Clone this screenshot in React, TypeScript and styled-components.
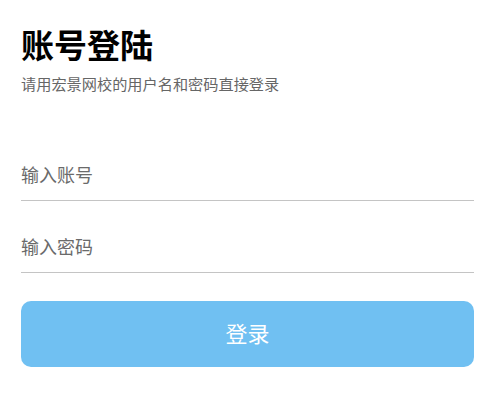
import React from "react";
import styled, { createGlobalStyle } from "styled-components";

const Global = createGlobalStyle`
  html, body { margin: 0; padding: 0; background: #fff; }
  body { font-family: "Noto Sans CJK SC", "Noto Sans", sans-serif; }
`;

const Page = styled.div`
  display: flex;
  flex-direction: column;
  padding: 24px 15px 0 21px;
`;

const Title = styled.h1`
  margin: 0;
  font-size: 33px;
  line-height: 40px;
  font-weight: 700;
  color: #000;
`;

const Subtitle = styled.p`
  margin: 8px 0 0;
  font-size: 15.2px;
  line-height: 22px;
  color: #666;
`;

const Form = styled.form`
  display: flex;
  flex-direction: column;
  margin-top: 35px;
`;

const Field = styled.input`
  box-sizing: border-box;
  border: none;
  border-bottom: 1px solid #c4c4c4;
  outline: none;
  padding: 18px 0 0;
  height: 72px;
  font-family: inherit;
  font-size: 18px;
  color: #333;
  background: transparent;
  &::placeholder { color: #6a6a6a; }
`;

const Button = styled.button`
  margin-top: 28px;
  height: 66px;
  padding: 0 0 5px;
  border: none;
  border-radius: 10px;
  background: #70c0f2;
  color: #fff;
  font-family: inherit;
  font-size: 22px;
`;

export default function App() {
  return (
    <>
      <Global />
      <Page>
        <Title>账号登陆</Title>
        <Subtitle>请用宏景网校的用户名和密码直接登录</Subtitle>
        <Form onSubmit={(e) => e.preventDefault()}>
          <Field placeholder="输入账号" />
          <Field type="password" placeholder="输入密码" />
          <Button type="submit">登录</Button>
        </Form>
      </Page>
    </>
  );
}
